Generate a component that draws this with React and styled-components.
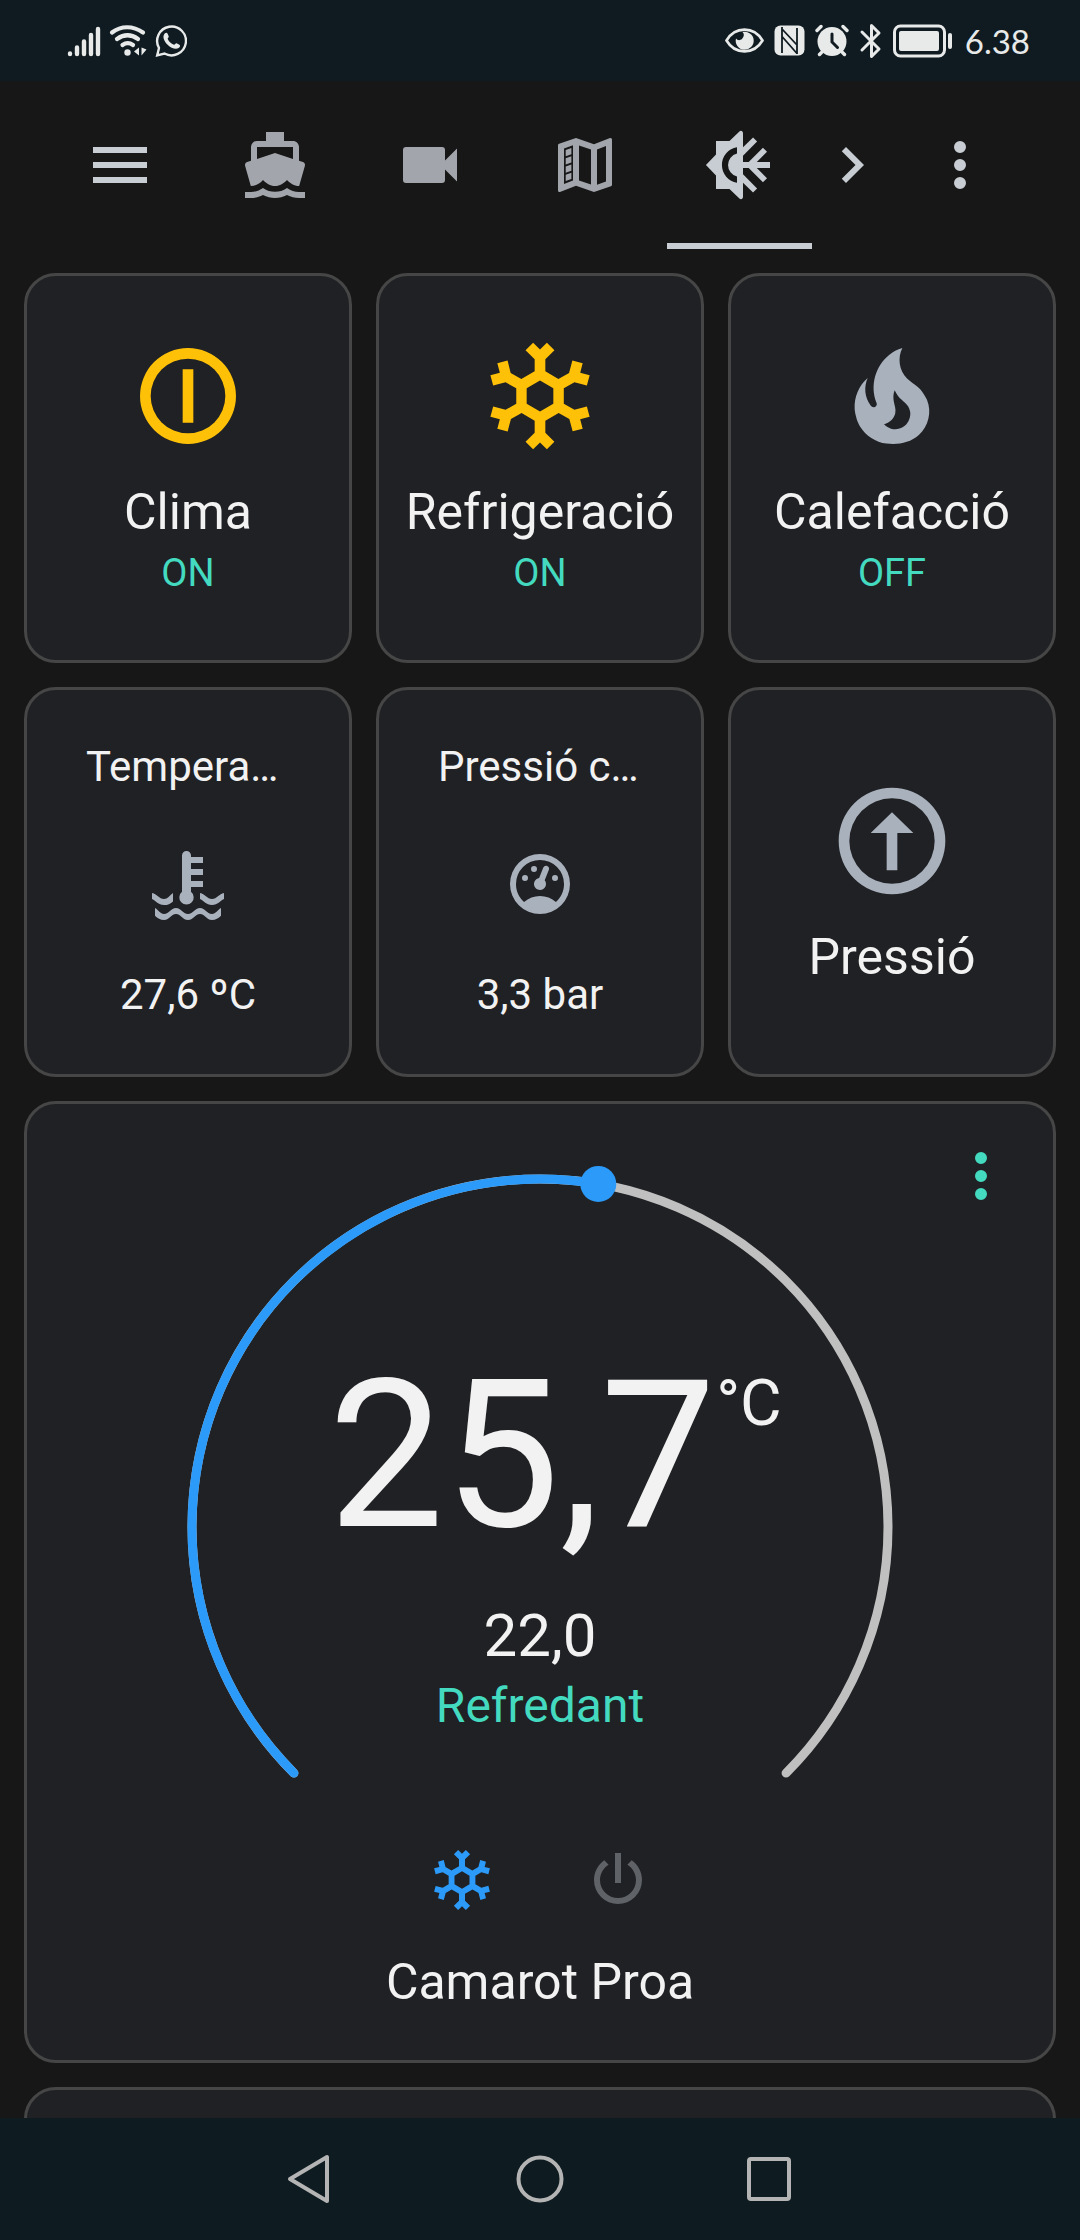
import React, { useState } from 'react';
import styled, { createGlobalStyle } from 'styled-components';

const GlobalStyle = createGlobalStyle`
  * {
    box-sizing: border-box;
  }

  body {
    margin: 0;
    background: #171717;
    color: #f2f2f2;
    font-family: Roboto, 'Liberation Sans', sans-serif;
  }

  button {
    padding: 0;
    border: 0;
    background: none;
    color: inherit;
    font: inherit;
    cursor: pointer;
  }
`;

const Page = styled.div`
  display: flex;
  flex-direction: column;
  height: 100vh;
`;

const StatusBar = styled.div`
  display: flex;
  justify-content: space-between;
  align-items: center;
  flex: none;
  height: 81px;
  padding: 0 50px 0 67px;
  background: #0f1b20;
  color: #e8eaea;
`;

const StatusGroup = styled.div`
  display: flex;
  align-items: center;
  gap: ${(props) => props.$gap}px;
`;

const Clock = styled.span`
  margin-left: 2px;
  font-family: Lato, sans-serif;
  font-size: 33px;
  line-height: 40px;
`;

const Header = styled.header`
  display: flex;
  flex: none;
  height: 168px;
  padding: 0 48px;
  color: #c8cdd3;
`;

const HeaderButton = styled.button`
  display: flex;
  justify-content: center;
  align-items: center;
  width: ${(props) => (props.$narrow ? 72 : 144)}px;
`;

const Tabs = styled.nav`
  display: flex;
  flex: 1;
  gap: 10px;
  padding-left: 10px;
`;

const Tab = styled.button`
  display: flex;
  justify-content: center;
  align-items: center;
  width: 145px;
  padding-top: 6px;
  border-bottom: 6px solid ${(props) => (props.$active ? '#c8cdd3' : 'transparent')};
  color: ${(props) => (props.$active ? '#c8cdd3' : '#a2a5ab')};
`;

const Main = styled.main`
  display: flex;
  flex-direction: column;
  flex: 1;
  gap: 24px;
  min-height: 0;
  padding: 24px;
  overflow-y: auto;
  scrollbar-width: none;
`;

const CardGrid = styled.div`
  display: grid;
  flex: none;
  grid-template-columns: repeat(3, 1fr);
  grid-auto-rows: 390px;
  gap: 24px;
`;

const Card = styled.section`
  min-width: 0;
  border: 3px solid #464646;
  border-radius: 32px;
  background: #202124;
`;

const ToggleCard = styled(Card)`
  display: flex;
  flex-direction: column;
  justify-content: center;
  align-items: center;
`;

const IconButton = styled.button`
  display: flex;
  margin-bottom: 22px;
  color: ${(props) => (props.$on ? '#ffc107' : '#a9b1bd')};
`;

const Name = styled.span`
  font-size: 50px;
  line-height: 60px;
`;

const State = styled.span`
  color: #43dac0;
  font-size: 38px;
  line-height: 62px;
`;

const SensorCard = styled(Card)`
  display: flex;
  flex-direction: column;
  justify-content: center;
  align-items: center;
  padding: 0 59px 2px;
  color: #a9b1bd;
`;

const SensorText = styled.span`
  color: #f2f2f2;
  font-size: 42px;
  line-height: 48px;
  white-space: nowrap;
`;

const SensorName = styled(SensorText)`
  width: 100%;
  margin-bottom: 57px;
`;

const SensorValue = styled(SensorText)`
  margin-top: 51px;
`;

const ThermostatCard = styled(Card)`
  position: relative;
  display: flex;
  flex: none;
  flex-direction: column;
  align-items: center;
  padding: 48px 0;
`;

const MoreButton = styled.button`
  position: absolute;
  top: 0;
  right: 0;
  display: flex;
  justify-content: center;
  align-items: center;
  width: 144px;
  height: 144px;
  color: #43dac0;
`;

// the arc and the readings share one grid cell
const Dial = styled.div`
  display: grid;
  justify-items: center;

  > * {
    grid-area: 1 / 1;
  }
`;

const DialRange = styled.input`
  width: 500px;
  height: 48px;
  margin: 0;
  opacity: 0;
`;

const Readings = styled.div`
  display: flex;
  flex-direction: column;
  align-items: center;
  padding-top: 184px;
`;

const Current = styled.div`
  display: flex;
  align-items: flex-start;
  margin-bottom: 22px;
  padding-left: 30px;
  font-size: 206px;
  line-height: 240px;
  font-kerning: none;
`;

const Unit = styled.span`
  padding-top: 30px;
  font-size: 64px;
  line-height: 76px;
`;

const Target = styled.span`
  font-size: 60px;
  line-height: 76px;
`;

const Action = styled.span`
  color: #43dac0;
  font-size: 48px;
  line-height: 64px;
`;

const Modes = styled.div`
  display: flex;
  gap: 12px;
`;

const ModeButton = styled.button`
  display: flex;
  justify-content: center;
  align-items: center;
  width: 144px;
  height: 144px;
  color: ${(props) => (props.$active ? '#2b9af9' : '#5f6267')};
`;

const NextCard = styled(Card)`
  flex: none;
  height: 390px;
`;

const NavBar = styled.nav`
  display: flex;
  justify-content: center;
  align-items: center;
  flex: none;
  gap: 158px;
  height: 122px;
  background: #0e1b20;
  color: #b4b4b4;
`;

const NavButton = styled.button`
  display: flex;
  justify-content: center;
  align-items: center;
  width: 72px;
  height: 72px;
`;

const paths = {
  menu: 'M3,6H21V8H3V6M3,11H21V13H3V11M3,16H21V18H3V16Z',
  ferry:
    'M6,6H18V9.96L12,8L6,9.96M3.94,19H4C5.6,19 7,18.12 8,17C9,18.12 10.4,19 12,19C13.6,19 15,18.12 16,17C17,18.12 18.4,19 20,19H20.05L21.95,12.31C22.03,12.06 22,11.78 21.89,11.54C21.76,11.3 21.55,11.12 21.29,11.04L20,10.62V6C20,4.89 19.1,4 18,4H15V1H9V4H6A2,2 0 0,0 4,6V10.62L2.71,11.04C2.45,11.12 2.24,11.3 2.11,11.54C2,11.78 1.97,12.06 2.05,12.31M20,21C18.61,21 17.22,20.53 16,19.67C13.56,21.38 10.44,21.38 8,19.67C6.78,20.53 5.39,21 4,21H2V23H4C5.37,23 6.74,22.65 8,22C10.5,23.3 13.5,23.3 16,22C17.26,22.65 18.62,23 20,23H22V21H20Z',
  video:
    'M17,10.5V7A1,1 0 0,0 16,6H4A1,1 0 0,0 3,7V17A1,1 0 0,0 4,18H16A1,1 0 0,0 17,17V13.5L21,17.5V6.5L17,10.5Z',
  map:
    'M9,3L3.36,4.9C3.15,4.97 3,5.15 3,5.38V20.5A0.5,0.5 0 0,0 3.5,21L3.66,20.97L9,18.9L15,21L20.64,19.1C20.85,19.03 21,18.85 21,18.62V3.5A0.5,0.5 0 0,0 20.5,3L20.34,3.03L15,5.1L9,3M8,5.45V17.15L5,18.31V6.46L8,5.45M10,5.47L14,6.87V18.53L10,17.13V5.47M19,5.7V17.54L16,18.55V6.86L19,5.7M7.46,6.3L5.57,6.97V9.12L7.46,8.45V6.3M7.46,9.05L5.57,9.72V11.87L7.46,11.2V9.05M7.46,11.8L5.57,12.47V14.62L7.46,13.95V11.8M7.46,14.55L5.57,15.22V17.37L7.46,16.7V14.55Z',
  sunSnow:
    'M13,1.4C13,0.8 12.4,0.3 11.8,0.8L8.5,4H4V8.5L0.65,12L4,15.5V20H8.5L11.8,23.2C12.4,23.7 13,23.2 13,22.6V17.9L16.35,21.15L17.7,19.8L13,15.1V13H14.9L19.65,17.75L21,16.4L17.6,13H22V11H17.6L21,7.6L19.65,6.25L14.9,11H13V8.9L17.7,4.2L16.35,2.85L13,6.1V1.4M11,6.08A6,6 0 0,0 11,17.92V15.87A4,4 0 0,1 11,8.13V6.08Z',
  chevron: 'M8.59,16.58L13.17,12L8.59,7.41L10,6L16,12L10,18L8.59,16.58Z',
  dots:
    'M12,16A2,2 0 0,1 14,18A2,2 0 0,1 12,20A2,2 0 0,1 10,18A2,2 0 0,1 12,16M12,10A2,2 0 0,1 14,12A2,2 0 0,1 12,14A2,2 0 0,1 10,12A2,2 0 0,1 12,10M12,4A2,2 0 0,1 14,6A2,2 0 0,1 12,8A2,2 0 0,1 10,6A2,2 0 0,1 12,4Z',
  on: 'M12,3A9,9 0 0,0 12,21A9,9 0 0,0 12,3M12,5A7,7 0 0,1 12,19A7,7 0 0,1 12,5M11,7V17H13V7Z',
  snowflake:
    'M20.79,13.95L18.46,14.57L16.46,13.44V10.56L18.46,9.43L20.79,10.05L21.31,8.12L19.54,7.65L20,5.88L18.07,5.36L17.45,7.69L15.45,8.82L13,7.38V5.12L14.71,3.41L13.29,2L12,3.29L10.71,2L9.29,3.41L11,5.12V7.38L8.5,8.82L6.5,7.69L5.92,5.36L4,5.88L4.47,7.65L2.7,8.12L3.22,10.05L5.55,9.43L7.55,10.56V13.45L5.55,14.58L3.22,13.96L2.7,15.89L4.47,16.36L4,18.12L5.93,18.64L6.55,16.31L8.55,15.18L11,16.62V18.88L9.29,20.59L10.71,22L12,20.71L13.29,22L14.7,20.59L13,18.88V16.62L15.5,15.17L17.5,16.3L18.12,18.63L20,18.12L19.53,16.35L21.3,15.88L20.79,13.95M9.5,10.56L12,9.11L14.5,10.56V13.44L12,14.89L9.5,13.44V10.56Z',
  fire:
    'M17.66 11.2C17.43 10.9 17.15 10.64 16.89 10.38C16.22 9.78 15.46 9.35 14.82 8.72C13.33 7.26 13 4.85 13.95 3C13 3.23 12.17 3.75 11.46 4.32C8.87 6.4 7.85 10.07 9.07 13.22C9.11 13.32 9.15 13.42 9.15 13.55C9.15 13.77 9 13.97 8.8 14.05C8.57 14.15 8.33 14.09 8.14 13.93C8.08 13.88 8.04 13.83 8 13.76C6.87 12.33 6.69 10.28 7.45 8.64C5.78 10 4.87 12.3 5 14.47C5.06 14.97 5.12 15.47 5.29 15.97C5.43 16.57 5.7 17.17 6 17.7C7.08 19.43 8.95 20.67 10.96 20.92C13.1 21.19 15.39 20.8 17.03 19.32C18.86 17.66 19.5 15 18.56 12.72L18.43 12.46C18.22 12 17.66 11.2 17.66 11.2M14.5 17.5C14.22 17.74 13.76 18 13.4 18.1C12.28 18.5 11.16 17.94 10.5 17.28C11.69 17 12.4 16.12 12.61 15.23C12.78 14.43 12.46 13.77 12.33 13C12.21 12.26 12.23 11.63 12.5 10.94C12.69 11.32 12.89 11.7 13.13 12C13.9 13 15.11 13.44 15.37 14.8C15.41 14.94 15.43 15.08 15.43 15.23C15.46 16.05 15.1 16.95 14.5 17.5H14.5Z',
  coolant:
    'M10,2.5A1.5,1.5 0 0,1 13,2.5V3H17V5H13V7H17V9H13V11H17V13H13V14.6A2.4,2.4 0 1,1 10,14.6ZM0,15C1.6,15.3 2.4,17 4,17C5.3,17 5.8,15.8 7,15V17.8C6.2,18.6 5.2,19 4,19C2,19 1.4,17.6 0,17ZM24,15C22.4,15.3 21.6,17 20,17C18.4,17 17.6,15.3 16,15V17C17.4,17.6 18,19 20,19C22,19 22.6,17.6 24,17ZM1,20C2.2,20.6 2.7,22 4,22C5.8,22 6.2,20 8,20C9.8,20 10.2,22 12,22C13.8,22 14.2,20 16,20C17.8,20 18.2,22 20,22C21.3,22 21.8,20.6 23,20V22.6C22.2,23.5 21.2,24 20,24C18,24 17.8,22 16,22C14.2,22 14,24 12,24C10,24 9.8,22 8,22C6.2,22 6,24 4,24C2.8,24 1.8,23.5 1,22.6Z',
  gauge:
    'M12,2A10,10 0 0,0 2,12A10,10 0 0,0 12,22A10,10 0 0,0 22,12A10,10 0 0,0 12,2M12,4A8,8 0 0,1 20,12C20,14.4 19,16.5 17.3,18C15.9,16.7 14,16 12,16C10,16 8.2,16.7 6.7,18C5,16.5 4,14.4 4,12A8,8 0 0,1 12,4M14,5.89C13.62,5.9 13.26,6.15 13.1,6.54L11.81,9.77L11.71,10C11,10.13 10.41,10.6 10.14,11.26C9.73,12.29 10.23,13.45 11.26,13.86C12.29,14.27 13.45,13.77 13.86,12.74C14.12,12.08 14,11.32 13.57,10.76L13.67,10.5L14.96,7.29L14.97,7.26C15.17,6.75 14.92,6.17 14.41,5.96C14.28,5.91 14.15,5.89 14,5.89M10,6A1,1 0 0,0 9,7A1,1 0 0,0 10,8A1,1 0 0,0 11,7A1,1 0 0,0 10,6M7,9A1,1 0 0,0 6,10A1,1 0 0,0 7,11A1,1 0 0,0 8,10A1,1 0 0,0 7,9M17,9A1,1 0 0,0 16,10A1,1 0 0,0 17,11A1,1 0 0,0 18,10A1,1 0 0,0 17,9Z',
  arrowUp:
    'M12,2A10,10 0 0,0 12,22A10,10 0 0,0 12,2M12,4A8,8 0 0,1 12,20A8,8 0 0,1 12,4M12,6.6L8,10.5H11V17.5H13V10.5H16Z',
  power:
    'M16.56,5.44L15.11,6.89C16.84,7.94 18,9.83 18,12A6,6 0 0,1 12,18A6,6 0 0,1 6,12C6,9.83 7.16,7.94 8.88,6.88L7.44,5.44C5.36,6.88 4,9.28 4,12A8,8 0 0,0 12,20A8,8 0 0,0 20,12C20,9.28 18.64,6.88 16.56,5.44M13,3H11V13H13',
};

const Icon = ({ name, size = 72 }) => (
  <svg width={size} height={size} viewBox="0 0 24 24" fill="currentColor" fillRule="evenodd" aria-hidden="true">
    <path d={paths[name]} />
  </svg>
);

const tabs = [
  { icon: 'ferry', label: 'Vaixell' },
  { icon: 'video', label: 'Càmeres' },
  { icon: 'map', label: 'Mapa' },
  { icon: 'sunSnow', label: 'Clima' },
];

const switches = [
  { icon: 'on', name: 'Clima', on: true },
  { icon: 'snowflake', name: 'Refrigeració', on: true },
  { icon: 'fire', name: 'Calefacció', on: false },
];

const sensors = [
  { icon: 'coolant', name: 'Tempera…', value: '27,6 ºC' },
  { icon: 'gauge', name: 'Pressió c…', value: '3,3 bar' },
];

const StatusIcons = () => (
  <StatusGroup $gap={8}>
    <svg width="34" height="34" viewBox="0 0 34 34" stroke="currentColor" strokeWidth="4.4" strokeLinecap="round">
      <path d="M3 29.5v.5M10 23.5V30M17 17.5V30M24 11V30M31 5V30" />
    </svg>
    <svg width="38" height="34" viewBox="0 0 38 34" fill="none" stroke="currentColor" strokeWidth="4.2" strokeLinecap="round">
      <path d="M3 8.5C12 1.5 24 1.5 34 8.5M8 15C15 10 22 10 29 15M13.5 21C17 18.5 20.5 18.5 24 21" />
      <circle cx="18.5" cy="28.5" r="3.2" fill="currentColor" stroke="none" />
      <path d="M30 23.5v8l-5-4zM32.5 23.5v8l5-6z" fill="currentColor" stroke="none" />
    </svg>
    <svg width="32" height="34" viewBox="0 0 32 34">
      <path d="M4 24A14.4 14.4 0 1 1 9.5 29.5L2.2 31.3Z" fill="none" stroke="currentColor" strokeWidth="2.4" />
      <path
        d="M9.5 9.7c1.5-1.6 2.6-1.2 3.2.2l1 2.4c.4 1-1.3 2-1 2.7 1.4 2.8 3.4 4.7 6.3 5.8.8.2 1.7-1.9 2.6-1.5l2.8 1.4c1.3.7.7 2.2-.8 3.4-2.6 1.8-7.6.2-11-3.3-3.5-3.6-5.5-8-3.1-11.1z"
        fill="currentColor"
      />
    </svg>
  </StatusGroup>
);

const SystemIcons = () => (
  <StatusGroup $gap={10}>
    <svg width="39" height="34" viewBox="0 0 39 34">
      <path d="M1.5 16.5C10 2 29 2 37.5 16.5 29 31 10 31 1.5 16.5z" fill="none" stroke="currentColor" strokeWidth="2.6" />
      <path d="M17.5 8A9 9 0 1 1 11 14.5a4 4 0 0 0 7-1 4.5 4.5 0 0 0-.5-5.5z" fill="currentColor" />
    </svg>
    <svg width="31" height="34" viewBox="0 0 31 34">
      <rect x="0.5" y="1.5" width="30" height="30" rx="6" fill="currentColor" />
      <path d="M8 3v26M23 4v26M8 5l15 16M8 12.5l15 17" stroke="#0f1b20" strokeWidth="1.8" fill="none" />
    </svg>
    <svg width="34" height="34" viewBox="0 0 34 34" stroke="currentColor" strokeLinecap="round" fill="none">
      <circle cx="17" cy="17.5" r="14.5" fill="currentColor" stroke="none" />
      <path d="M2 6.5l4-4M28 2.5l4 4M6.5 28.5l-2 2M27.5 28.5l2 2" strokeWidth="3.4" />
      <path d="M17 10v8l5.5 5.5" stroke="#0f1b20" strokeWidth="3" />
    </svg>
    <svg width="24" height="36" viewBox="0 0 24 36" fill="none" stroke="currentColor" strokeWidth="3" strokeLinejoin="round" strokeLinecap="round">
      <path d="M3 9l17 17-7.5 7.5V2.5L20 10 3 27" />
    </svg>
    <svg width="60" height="34" viewBox="0 0 60 34">
      <rect x="1.5" y="2" width="50" height="30" rx="6" fill="none" stroke="currentColor" strokeWidth="3" />
      <rect x="6" y="7" width="40" height="20" rx="2" fill="currentColor" />
      <rect x="55" y="9" width="4" height="16" rx="2" fill="currentColor" />
    </svg>
    <Clock>6.38</Clock>
  </StatusGroup>
);

const RADIUS = 348;
const MIN = 7;
const MAX = 35;

// degrees run clockwise from twelve o'clock
const pointAt = (degrees) => {
  const angle = (degrees * Math.PI) / 180;
  return [375 + RADIUS * Math.sin(angle), 375 - RADIUS * Math.cos(angle)];
};

const arc = (from, to) => {
  const large = to - from > 180 ? 1 : 0;
  return `M${pointAt(from).join(' ')}A${RADIUS} ${RADIUS} 0 ${large} 1 ${pointAt(to).join(' ')}`;
};

const DialArc = ({ value }) => {
  const angle = -135 + ((value - MIN) / (MAX - MIN)) * 270;
  const [x, y] = pointAt(angle);

  return (
    <svg width="750" height="656" viewBox="0 0 750 656" fill="none" strokeWidth="9" strokeLinecap="round" aria-hidden="true">
      <path d={arc(-135, 135)} stroke="#c0c0c0" />
      <path d={arc(-135, angle)} stroke="#2b9af9" />
      <circle cx={x} cy={y} r="18" fill="#2b9af9" />
    </svg>
  );
};

const Thermostat = () => {
  const [target, setTarget] = useState(22);
  const [mode, setMode] = useState('cool');

  return (
    <ThermostatCard>
      <Dial>
        <DialRange
          type="range"
          aria-label="Temperatura desitjada"
          min={MIN}
          max={MAX}
          step="0.5"
          value={target}
          onChange={(e) => setTarget(Number(e.target.value))}
        />
        <DialArc value={target} />
        <Readings>
          <Current>
            25,7
            <Unit>°C</Unit>
          </Current>
          <Target>{target.toFixed(1).replace('.', ',')}</Target>
          <Action>Refredant</Action>
        </Readings>
      </Dial>
      <Modes>
        <ModeButton $active={mode === 'cool'} onClick={() => setMode('cool')} aria-label="Refredar">
          <Icon name="snowflake" />
        </ModeButton>
        <ModeButton $active={mode === 'off'} onClick={() => setMode('off')} aria-label="Apagar">
          <Icon name="power" />
        </ModeButton>
      </Modes>
      <Name>Camarot Proa</Name>
      <MoreButton aria-label="Més informació">
        <Icon name="dots" />
      </MoreButton>
    </ThermostatCard>
  );
};

function App() {
  const [tab, setTab] = useState('Clima');

  return (
    <>
      <GlobalStyle />
      <Page>
        <StatusBar>
          <StatusIcons />
          <SystemIcons />
        </StatusBar>
        <Header>
          <HeaderButton aria-label="Menú">
            <Icon name="menu" />
          </HeaderButton>
          <Tabs>
            {tabs.map(({ icon, label }) => (
              <Tab key={label} $active={label === tab} onClick={() => setTab(label)} aria-label={label}>
                <Icon name={icon} />
              </Tab>
            ))}
          </Tabs>
          <HeaderButton $narrow aria-label="Següent">
            <Icon name="chevron" />
          </HeaderButton>
          <HeaderButton aria-label="Opcions">
            <Icon name="dots" />
          </HeaderButton>
        </Header>
        <Main>
          <CardGrid>
            {switches.map(({ icon, name, on }) => (
              <ToggleCard key={name}>
                <IconButton $on={on} aria-label={name}>
                  <Icon name={icon} size={128} />
                </IconButton>
                <Name>{name}</Name>
                <State>{on ? 'ON' : 'OFF'}</State>
              </ToggleCard>
            ))}
            {sensors.map(({ icon, name, value }) => (
              <SensorCard key={name}>
                <SensorName>{name}</SensorName>
                <Icon name={icon} />
                <SensorValue>{value}</SensorValue>
              </SensorCard>
            ))}
            <ToggleCard>
              <IconButton aria-label="Pressió">
                <Icon name="arrowUp" size={128} />
              </IconButton>
              <Name>Pressió</Name>
            </ToggleCard>
          </CardGrid>
          <Thermostat />
          <NextCard />
        </Main>
        <NavBar>
          <NavButton aria-label="Enrere">
            <svg width="48" height="56" viewBox="0 0 48 56" fill="none" stroke="currentColor" strokeWidth="4" strokeLinejoin="round">
              <path d="M41 6v44L4 28z" />
            </svg>
          </NavButton>
          <NavButton aria-label="Inici">
            <svg width="48" height="48" viewBox="0 0 48 48" fill="none" stroke="currentColor" strokeWidth="4">
              <circle cx="24" cy="24" r="21.5" />
            </svg>
          </NavButton>
          <NavButton aria-label="Recents">
            <svg width="48" height="48" viewBox="0 0 48 48" fill="none" stroke="currentColor" strokeWidth="4">
              <rect x="3" y="4" width="40" height="40" rx="2" />
            </svg>
          </NavButton>
        </NavBar>
      </Page>
    </>
  );
}

export default App;
